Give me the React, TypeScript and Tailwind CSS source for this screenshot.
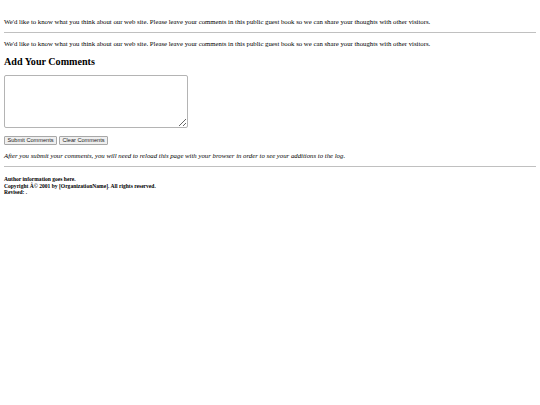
export default function App() {
  return (
    <div className="w-[540px] h-[405px] bg-white text-black px-[4px] pt-[17px]" style={{ fontFamily: '"Liberation Serif", "Times New Roman", serif' }}>
      <p className="text-[6.75px] leading-[9px] m-0">
        We'd like to know what you think about our web site. Please leave your comments in this public guest book so we can share your thoughts with other visitors.
      </p>
      <hr className="mt-[6px] border-0 border-t-[1px] border-[#c0c0c0] h-0" />
      <p className="text-[6.75px] leading-[9px] mt-[6px]">
        We'd like to know what you think about our web site. Please leave your comments in this public guest book so we can share your thoughts with other visitors.
      </p>
      <h2 className="text-[10.1px] leading-[12px] font-bold mt-[8px]">Add Your Comments</h2>
      <textarea className="block mt-[7px] w-[184px] h-[53px] border border-[#b4b4b4] rounded-[2px] bg-white resize" />
      <div className="flex gap-[2px] mt-[8px]" style={{ fontFamily: '"Liberation Sans", Arial, sans-serif' }}>
        <button className="h-[9px] w-[53px] text-[5.6px] leading-[7px] text-[#222] border border-[#a8a8a8] rounded-[1px] bg-[#efefef]">Submit Comments</button>
        <button className="h-[9px] w-[49px] text-[5.6px] leading-[7px] text-[#222] border border-[#a8a8a8] rounded-[1px] bg-[#efefef]">Clear Comments</button>
      </div>
      <p className="italic text-[6.78px] leading-[8px] mt-[7px]">
        After you submit your comments, you will need to reload this page with your browser in order to see your additions to the log.
      </p>
      <hr className="mt-[6px] border-0 border-t-[1px] border-[#c0c0c0] h-0" />
      <div className="font-bold text-[5.55px] leading-[6.5px] mt-[9px]">
        <div>Author information goes here.</div>
        <div>Copyright Â© 2001 by [OrganizationName]. All rights reserved.</div>
        <div>Revised: .</div>
      </div>
    </div>
  );
}
